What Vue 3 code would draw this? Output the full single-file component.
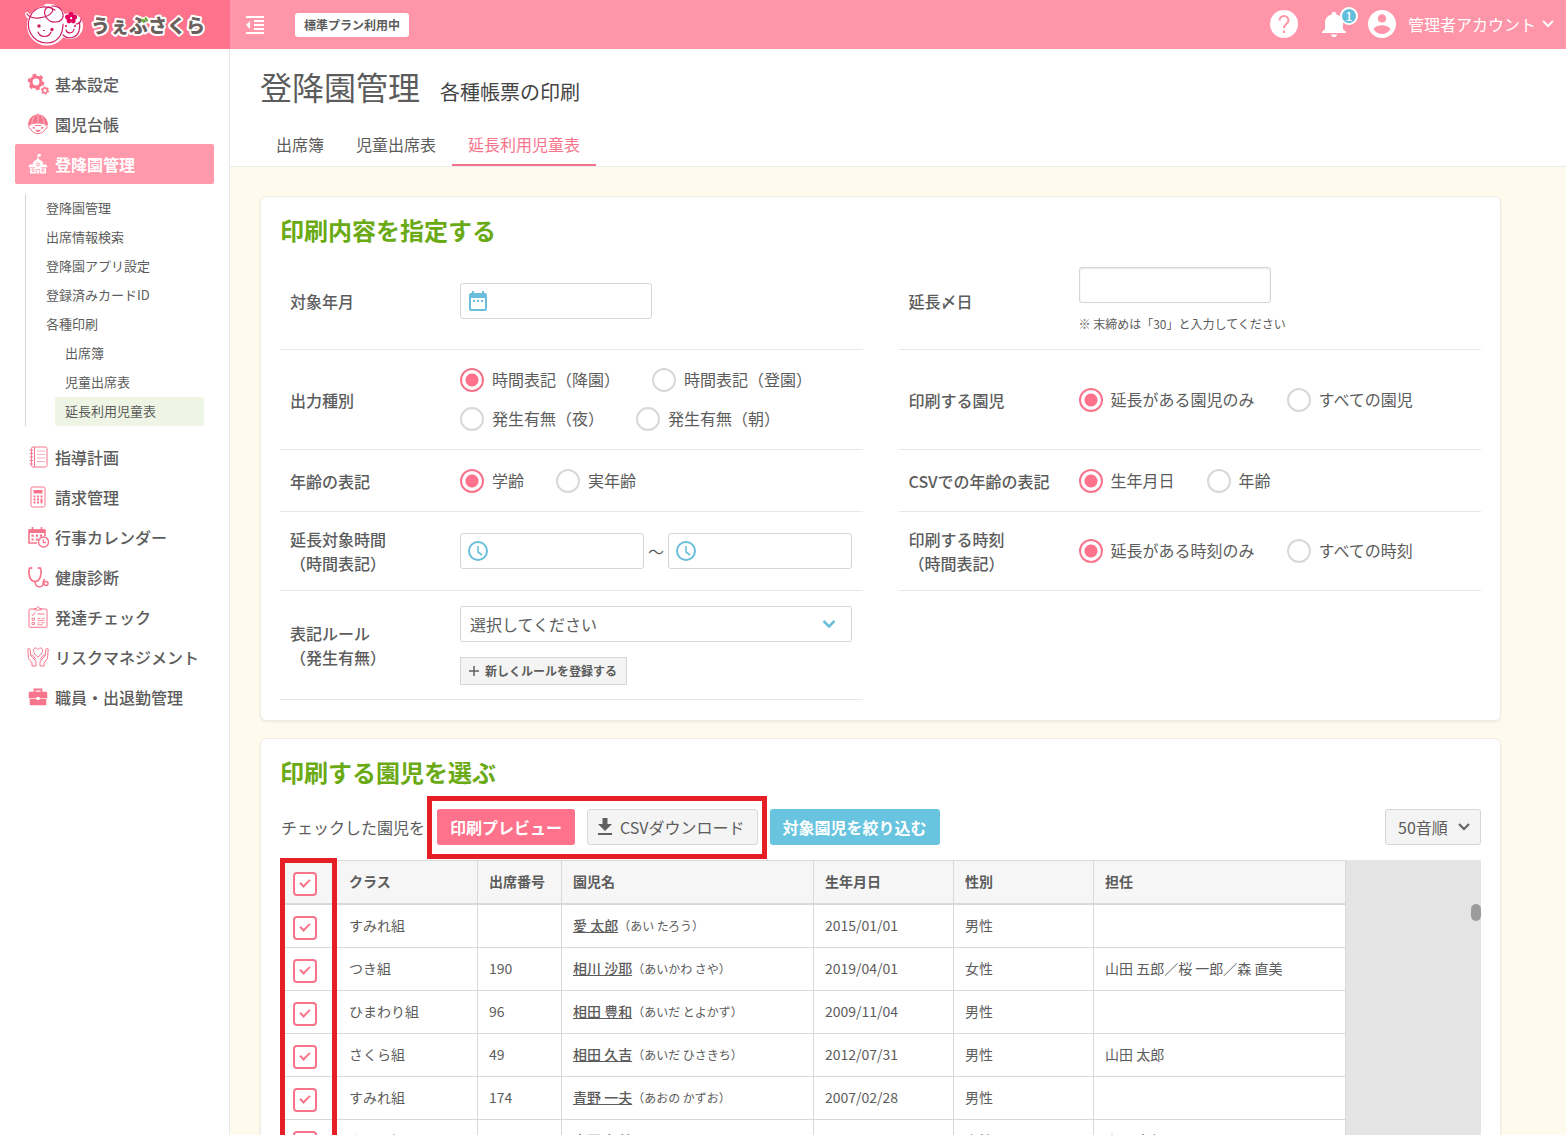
<script setup>
import { ref } from 'vue'

const menuTop = [
  { icon: 'gears', label: '基本設定' },
  { icon: 'child', label: '園児台帳' },
  { icon: 'school', label: '登降園管理', active: true },
]
const subMenu = [
  { label: '登降園管理' },
  { label: '出席情報検索' },
  { label: '登降園アプリ設定' },
  { label: '登録済みカードID' },
  { label: '各種印刷' },
  { label: '出席簿', nested: true },
  { label: '児童出席表', nested: true },
  { label: '延長利用児童表', nested: true, current: true },
]
const menuBottom = [
  { icon: 'notebook', label: '指導計画' },
  { icon: 'calculator', label: '請求管理' },
  { icon: 'calendar', label: '行事カレンダー' },
  { icon: 'stethoscope', label: '健康診断' },
  { icon: 'clipboard', label: '発達チェック' },
  { icon: 'hands', label: 'リスクマネジメント' },
  { icon: 'briefcase', label: '職員・出退勤管理' },
]

const icons = {
  gears: `<circle cx="9" cy="9" r="5" stroke-width="3.200"/><circle cx="9" cy="9" r="7.200" stroke-width="2.200" stroke-dasharray="3.700 3.840"/><circle cx="18" cy="17.500" r="2.400" stroke-width="1.500"/><circle cx="18" cy="17.500" r="3.500" stroke-width="1.200" stroke-dasharray="1.800 1.860"/>`,
  child: `<path d="M1.500 12C2 5 6 2 11 2s9 3 9.500 10c-6-2.600-13-2.600-19 0z" fill="currentColor"/><path d="M11 2v8.500M7.500 3C5.500 5.500 5 8 5 10.500M14.500 3c2 2.500 2.500 5 2.500 7.500" stroke="#fff" stroke-width=".5"/><path d="M10 1.200h2"/><path d="M3.500 12.500c-2-.6-2.700 3.300.2 3.400 1.700 6.200 12.900 6.200 14.600 0 2.900-.1 2.200-4 .2-3.400"/><path d="M8 12.500h6M8.700 17.300c1.400 1.500 3.200 1.500 4.600 0z" fill="currentColor"/><circle cx="6.800" cy="14.800" r=".7" fill="currentColor"/><circle cx="15.200" cy="14.800" r=".7" fill="currentColor"/>`,
  school: `<path d="M11 8V1.500M11 1.500h2.500v1.500H11" fill="currentColor"/><path d="M11 5.500l5 3.500v2.500h3.500l1 3h-19l1-3H6V9z" fill="currentColor" stroke="none"/><path d="M3 14v6.500h16V14z" fill="currentColor" stroke="none"/><g stroke="#ff99ab"><circle cx="11" cy="11.500" r="1.500"/><path d="M9.300 20.500v-4h3.400v4M5 16h2v2.500H5zM15 16h2v2.500h-2zM2 14.700h6M14 14.700h6" stroke-width=".8"/></g>`,
  notebook: `<rect x="4.500" y="1" width="15.500" height="20" rx="1.500"/><path d="M7.500 1v20M2.500 4h3.500M2.500 7.500h3.500M2.500 11h3.500M2.500 14.500h3.500M2.500 18h3.500" /><path d="M10 5h8M10 8.500h8M10 12h8M10 15.500h8" stroke-width=".6"/>`,
  calculator: `<rect x="4" y="1" width="14" height="20" rx="1.500"/><path d="M6.500 4h9v3.500h-9z" fill="currentColor" stroke="none"/><path d="M6.500 10.500h2M10 10.500h2M13.500 10.500h2M6.500 13.500h2M10 13.500h2M6.500 16.500h2M10 16.500h2" stroke-width="1.800"/><path d="M14.500 12.600v4.800" stroke-width="2"/>`,
  calendar: `<path d="M10 17H2V4h16v6" stroke-width="1.600"/><path d="M2 3.500h16V7H2z" fill="currentColor" stroke="none"/><path d="M5.500 1v4M14.500 1v4" stroke-width="1.700"/><path d="M4.500 9.700h2.200M8.800 9.700H11M13 9.700h2.200M4.500 13.500h2.200M8.800 13.500H11" stroke-width="2.200"/><circle cx="16.500" cy="16" r="5" fill="#fff" stroke-width="1.500"/><path d="M16.300 13.200v3.300h2.600" stroke-width="1.300"/>`,
  stethoscope: `<path d="M5 2H2.500C.8 7 2.500 15.500 8 15.500S15.200 7 13.500 2H11" stroke-width="1.700"/><path d="M8 15.500c0 7 8 6 8 2.500 0-3 .5-4.500 2-4.500" stroke-width="1.500"/><circle cx="19" cy="17.500" r="2" stroke-width="1.500"/><path d="M4.500 1.200v1.700M11.500 1.200v1.700" stroke-width="1.500"/>`,
  clipboard: `<rect x="2" y="3" width="18" height="18.300" rx="1"/><path d="M7.500 4V2.500h2c0-2 3-2 3 0h2V4z" fill="#fff"/><path d="M4.800 8.500l1.200 1 2-3M10.500 8h7"/><path d="M5 12.200h2.500v2H5zM5 16.500h2.500v2H5zM10.500 12.300h3M15 12.300h2.500M10.500 14.300h7M10.500 16.800h2M14 16.800h3.500M10.500 18.800h5" stroke-width=".9"/>`,
  hands: `<path d="M11 11C4.500 6.500 6 2 8.500 2 10 2 11 3.600 11 3.600S12 2 13.500 2C16 2 17.500 6.500 11 11z"/><path d="M5 20v-3l-3.500-4.500-.7-9.500c1-1 2.200-.6 2.300.5l.7 6 4 4.500c1.500 1.500 1.200 3 1.200 6zM3.800 9.500c1-.9 2-.4 2.500.3l2.500 3.500"/><path d="M17 20v-3l3.500-4.500.7-9.500c-1-1-2.200-.6-2.300.5l-.7 6-4 4.500c-1.500 1.500-1.200 3-1.200 6zM18.200 9.500c-1-.9-2-.4-2.500.3l-2.500 3.500"/>`,
  briefcase: `<path d="M2.500 6.500h17v5.500h-17zM3.500 13h15v5.500h-15z" fill="currentColor" stroke-linejoin="round" stroke-width="1.500"/><path d="M7.500 6V3.500h7V6" stroke-width="1.800"/><path d="M2 12.500h18" stroke="#fff" stroke-width=".7"/><path d="M9.500 11h3v3h-3z" fill="#fff" stroke="none"/>`,
}

const tabs = [
  { label: '出席簿' },
  { label: '児童出席表' },
  { label: '延長利用児童表', active: true },
]

const output = ref('降園')
const target = ref('延長')
const age = ref('学齢')
const csvAge = ref('生年月日')
const clock = ref('延長')

const columns = ['クラス', '出席番号', '園児名', '生年月日', '性別', '担任']
const children = ref([
  { group: 'すみれ組', no: '', name: '愛 太郎', kana: 'あい たろう', birth: '2015/01/01', sex: '男性', teacher: '', on: true },
  { group: 'つき組', no: '190', name: '相川 沙耶', kana: 'あいかわ さや', birth: '2019/04/01', sex: '女性', teacher: '山田 五郎／桜 一郎／森 直美', on: true },
  { group: 'ひまわり組', no: '96', name: '相田 豊和', kana: 'あいだ とよかず', birth: '2009/11/04', sex: '男性', teacher: '', on: true },
  { group: 'さくら組', no: '49', name: '相田 久吉', kana: 'あいだ ひさきち', birth: '2012/07/31', sex: '男性', teacher: '山田 太郎', on: true },
  { group: 'すみれ組', no: '174', name: '青野 一夫', kana: 'あおの かずお', birth: '2007/02/28', sex: '男性', teacher: '', on: true },
  { group: 'さくら組', no: '50', name: '青野 久美', kana: 'あおの くみ', birth: '2012/05/20', sex: '女性', teacher: '山田 太郎', on: true },
])
const all = ref(true)
function toggleAll() {
  children.value.forEach((c) => { c.on = all.value })
}
</script>

<template>
  <div class="shell">
    <header class="topbar">
      <a class="brand" href="#" aria-label="うぇぶさくら">
        <svg width="190" height="44" viewBox="22 2 190 44" fill="none" stroke-linecap="round">
          <circle cx="47" cy="24.500" r="20" fill="#fff" />
          <circle cx="70" cy="25" r="13" fill="#fff" />
          <path d="M27 13c2 5 8 5 12 2M46 5c8-1 16 4 18 12" stroke="#fff" stroke-width="4" />
          <g stroke="#cf1c63" stroke-width="1.200">
            <path d="M55 9C46 3 35 6 31 14c-7 12 1 28 16 28 10 0 16-8 16-19" />
            <path d="M27 13c5 7 21 4 25-2 3-5-5-7-7-2-2 6 4 13 11 12 5 0 8-4 7-8-1-5-5-8-11-8" />
            <path d="M63 34c5 5 14 3 16-4 1-4 1-7 0-9M81 18c0 3-2 5-5 5" />
            <path d="M38 31c2 6 11 6 13 0M66 29c1 4 7 4 8-1" />
            <path d="M43.500 29.500h1" />
          </g>
          <g fill="#cf1c63"><circle cx="39" cy="25" r="1.700" /><circle cx="52" cy="28.500" r="1.700" /><circle cx="66" cy="25" r="1.100" /><circle cx="75" cy="25" r="1.100" /></g>
          <g fill="#e4005d"><circle cx="71" cy="13.500" r="2.600" /><circle cx="67.700" cy="16" r="2.600" /><circle cx="69" cy="20" r="2.400" /><circle cx="73.300" cy="20" r="2.400" /><circle cx="74.500" cy="16" r="2.600" /></g>
          <text x="91" y="32" class="brand-name">うぇぶさくら</text>
          <path d="M142 18.500l1.500 2.500M145.500 17l1.500 2.500" stroke="#6fba2c" stroke-width="2" />
        </svg>
      </a>
      <button class="plain" type="button" aria-label="メニューを閉じる">
        <svg width="18" height="18" viewBox="3 3 18 18" fill="#fff"><path d="M11 17h10v-2H11v2zm-8-5l4 4V8l-4 4zm0 9h18v-2H3v2zM3 3v2h18V3H3zm8 6h10V7H11v2zm0 4h10v-2H11v2z" /></svg>
      </button>
      <span class="plan">標準プラン利用中</span>
      <div class="tools">
        <button class="plain" type="button" aria-label="ヘルプ">
          <svg width="28" height="28" viewBox="0 0 28 28"><circle cx="14" cy="14" r="14" fill="#fff" /><path d="M9.500 10.500a4.500 4.500 0 119 0c0 3.500-4.500 3.700-4.500 7.500" fill="none" stroke="#ff95a8" stroke-width="2" /><path d="M13 20.500h2v2.500h-2z" fill="#ff95a8" /></svg>
        </button>
        <button class="plain bell" type="button" aria-label="お知らせ">
          <svg width="24" height="26" viewBox="4 2 16 20" fill="#fff" preserveAspectRatio="none"><path d="M12 22c1.100 0 2-.9 2-2h-4c0 1.100.89 2 2 2zm6-6v-5c0-3.070-1.640-5.640-4.500-6.320V4c0-.83-.67-1.500-1.500-1.500s-1.500.67-1.500 1.500v.68C7.630 5.360 6 7.920 6 11v5l-2 2v1h16v-1l-2-2z" /></svg>
          <span class="count">1</span>
        </button>
        <button class="plain account" type="button">
          <svg width="28" height="28" viewBox="2 2 20 20" fill="#fff"><path d="M12 2C6.480 2 2 6.480 2 12s4.480 10 10 10 10-4.480 10-10S17.520 2 12 2zm0 3c1.660 0 3 1.340 3 3s-1.340 3-3 3-3-1.340-3-3 1.340-3 3-3zm0 14.200c-2.500 0-4.710-1.280-6-3.220.03-1.990 4-3.080 6-3.080 1.990 0 5.970 1.090 6 3.080-1.290 1.940-3.500 3.220-6 3.220z" /></svg>
          <span>管理者アカウント</span>
          <svg class="caret" width="12" height="8" viewBox="0 0 12 8" fill="none" stroke="#fff" stroke-width="2"><path d="M1 1l5 5 5-5" /></svg>
        </button>
      </div>
    </header>

    <div class="body">
      <nav class="sidebar">
        <a v-for="m in menuTop" :key="m.label" href="#" class="item" :class="{ active: m.active }">
          <svg class="glyph" viewBox="0 0 22 22" v-html="icons[m.icon]" />
          {{ m.label }}
        </a>
        <div class="submenu">
          <a v-for="s in subMenu" :key="s.label + s.nested" href="#" class="sub" :class="{ nested: s.nested, current: s.current }">{{ s.label }}</a>
        </div>
        <a v-for="m in menuBottom" :key="m.label" href="#" class="item">
          <svg class="glyph" viewBox="0 0 22 22" v-html="icons[m.icon]" />
          {{ m.label }}
        </a>
      </nav>

      <main class="main">
        <div class="pagehead">
          <div class="titles">
            <h1>登降園管理</h1>
            <p>各種帳票の印刷</p>
          </div>
          <div class="tabs">
            <a v-for="t in tabs" :key="t.label" href="#" :class="{ active: t.active }">{{ t.label }}</a>
          </div>
        </div>

        <div class="content">
          <section class="card">
            <h2>印刷内容を指定する</h2>
            <form class="form" @submit.prevent>
              <div class="row">
                <label class="name" for="month">対象年月</label>
                <div class="iconbox month">
                  <svg width="18" height="20" viewBox="0 0 18 20"><path d="M3 0h2v2h8V0h2v2h1a2 2 0 012 2v14a2 2 0 01-2 2H2a2 2 0 01-2-2V4a2 2 0 012-2h1zM2 7v11h14V7z" fill="#69bfdb" fill-rule="evenodd" /><path d="M4 9h2v2H4zm4 0h2v2H8zm4 0h2v2h-2z" fill="#69bfdb" /></svg>
                  <input id="month" type="text" />
                </div>
              </div>
              <div class="row">
                <label class="name" for="closing">延長〆日</label>
                <div>
                  <input id="closing" class="closing" type="text" />
                  <p class="note">※ 末締めは「30」と入力してください</p>
                </div>
              </div>

              <div class="row">
                <span class="name">出力種別</span>
                <div class="radios two">
                  <div class="line">
                    <label class="radio"><input v-model="output" type="radio" name="output" value="降園" />時間表記（降園）</label>
                    <label class="radio"><input v-model="output" type="radio" name="output" value="登園" />時間表記（登園）</label>
                  </div>
                  <div class="line">
                    <label class="radio"><input v-model="output" type="radio" name="output" value="夜" />発生有無（夜）</label>
                    <label class="radio"><input v-model="output" type="radio" name="output" value="朝" />発生有無（朝）</label>
                  </div>
                </div>
              </div>
              <div class="row">
                <span class="name">印刷する園児</span>
                <div class="line">
                  <label class="radio"><input v-model="target" type="radio" name="target" value="延長" />延長がある園児のみ</label>
                  <label class="radio"><input v-model="target" type="radio" name="target" value="全部" />すべての園児</label>
                </div>
              </div>

              <div class="row">
                <span class="name">年齢の表記</span>
                <div class="line">
                  <label class="radio"><input v-model="age" type="radio" name="age" value="学齢" />学齢</label>
                  <label class="radio"><input v-model="age" type="radio" name="age" value="実年齢" />実年齢</label>
                </div>
              </div>
              <div class="row">
                <span class="name">CSVでの年齢の表記</span>
                <div class="line">
                  <label class="radio"><input v-model="csvAge" type="radio" name="csvAge" value="生年月日" />生年月日</label>
                  <label class="radio"><input v-model="csvAge" type="radio" name="csvAge" value="年齢" />年齢</label>
                </div>
              </div>

              <div class="row">
                <label class="name" for="from">延長対象時間<br />（時間表記）</label>
                <div class="range">
                  <div class="iconbox">
                    <svg width="20" height="20" viewBox="0 0 20 20" fill="none" stroke="#69bfdb" stroke-width="2"><circle cx="10" cy="10" r="9" /><path d="M10 5v6l4 3" stroke-width="1.600" /></svg>
                    <input id="from" type="text" />
                  </div>
                  <span class="wave">～</span>
                  <div class="iconbox">
                    <svg width="20" height="20" viewBox="0 0 20 20" fill="none" stroke="#69bfdb" stroke-width="2"><circle cx="10" cy="10" r="9" /><path d="M10 5v6l4 3" stroke-width="1.600" /></svg>
                    <input type="text" aria-label="終了時刻" />
                  </div>
                </div>
              </div>
              <div class="row">
                <span class="name">印刷する時刻<br />（時間表記）</span>
                <div class="line">
                  <label class="radio"><input v-model="clock" type="radio" name="clock" value="延長" />延長がある時刻のみ</label>
                  <label class="radio"><input v-model="clock" type="radio" name="clock" value="全部" />すべての時刻</label>
                </div>
              </div>

              <div class="row">
                <label class="name" for="rule">表記ルール<br />（発生有無）</label>
                <div class="rule">
                  <div class="select">
                    <select id="rule"><option>選択してください</option></select>
                    <svg width="14" height="9" viewBox="0 0 14 9" fill="none" stroke="#69bfdb" stroke-width="2.500"><path d="M1.500 1L7 6.500 12.500 1" /></svg>
                  </div>
                  <button class="add" type="button">
                    <svg width="10" height="10" viewBox="0 0 10 10" stroke="#606060" stroke-width="1.500"><path d="M5 0v10M0 5h10" /></svg>
                    新しくルールを登録する
                  </button>
                </div>
              </div>
            </form>
          </section>

          <section class="card">
            <h2>印刷する園児を選ぶ</h2>
            <div class="toolbar">
              <span>チェックした園児を</span>
              <div class="marked">
                <button class="btn pink" type="button">印刷プレビュー</button>
                <button class="btn gray" type="button">
                  <svg width="16" height="18" viewBox="0 0 16 18" fill="#606060"><path d="M5.500 0h5v6H15l-7 7-7-7h4.500zM1 15h14v2H1z" /></svg>
                  CSVダウンロード
                </button>
              </div>
              <button class="btn blue" type="button">対象園児を絞り込む</button>
              <div class="select sort">
                <select aria-label="並び順"><option>50音順</option></select>
                <svg width="12" height="8" viewBox="0 0 12 8" fill="none" stroke="#606060" stroke-width="2"><path d="M1 1l5 5 5-5" /></svg>
              </div>
            </div>

            <div class="grid">
              <table>
                <colgroup>
                  <col class="c-check" /><col class="c-mid" /><col class="c-no" /><col class="c-wide" /><col class="c-mid" /><col class="c-mid" /><col class="c-wide" />
                </colgroup>
                <thead>
                  <tr>
                    <th><input v-model="all" type="checkbox" aria-label="すべて選択" @change="toggleAll" /></th>
                    <th v-for="c in columns" :key="c">{{ c }}</th>
                  </tr>
                </thead>
                <tbody>
                  <tr v-for="c in children" :key="c.name">
                    <td><input v-model="c.on" type="checkbox" :aria-label="c.name" /></td>
                    <td>{{ c.group }}</td>
                    <td>{{ c.no }}</td>
                    <td><a href="#">{{ c.name }}</a><small>（{{ c.kana }}）</small></td>
                    <td>{{ c.birth }}</td>
                    <td>{{ c.sex }}</td>
                    <td>{{ c.teacher }}</td>
                  </tr>
                </tbody>
              </table>
              <span class="thumb"></span>
            </div>
          </section>
        </div>
      </main>
    </div>
  </div>
</template>

<style>
body {
  margin: 0;
}
</style>

<style scoped>
.shell {
  display: flex;
  flex-direction: column;
  height: 100vh;
  overflow: hidden;
  color: #5c5c5c;
  font-family: "Noto Sans CJK JP", sans-serif;
  font-size: 16px;
  line-height: 24px;
}
.shell *,
.shell *::before,
.shell *::after {
  box-sizing: border-box;
}
a {
  color: inherit;
  text-decoration: none;
}
button,
input,
select {
  font: inherit;
  color: inherit;
}
h1,
h2,
p {
  margin: 0;
}
svg {
  display: block;
  flex: none;
}
.topbar {
  display: flex;
  align-items: center;
  flex: none;
  height: 49px;
  background: #ff95a8;
  color: #fff;
}
.brand {
  display: flex;
  align-items: center;
  width: 230px;
  height: 100%;
  padding-left: 22px;
  margin-right: 16px;
  background: #ff728b;
}
.brand-name {
  font-size: 19px;
  font-weight: 900;
  fill: #6b5f5c;
  stroke: #fff;
  stroke-width: 4px;
  stroke-linejoin: round;
  paint-order: stroke;
}
.plain {
  display: flex;
  padding: 0;
  border: 0;
  background: none;
}
.plan {
  margin-left: 31px;
  padding: 0 9px;
  border-radius: 3px;
  background: #fff;
  color: #5c5c5c;
  font-size: 12px;
  font-weight: 700;
}
.tools {
  display: flex;
  align-items: center;
  gap: 22px;
  margin-left: auto;
  padding: 0 12px 2px 0;
}
.bell {
  position: relative;
  margin-left: 2px;
}
.count {
  position: absolute;
  top: -4px;
  right: -12px;
  width: 18px;
  height: 18px;
  border: 2px solid #fff;
  border-radius: 50%;
  background: #62bfdc;
  font-size: 12px;
  font-weight: 500;
  line-height: 14px;
  text-align: center;
}
.account {
  align-items: center;
  gap: 12px;
}
.caret {
  margin-left: -6px;
}
.body {
  display: flex;
  flex: 1;
  min-height: 0;
}
.sidebar {
  flex: none;
  width: 230px;
  padding: 15px;
  border-right: 1px solid #e9e9e9;
  background: #fff;
}
.item {
  display: flex;
  align-items: center;
  gap: 6px;
  height: 40px;
  padding-left: 12px;
  border-radius: 2px;
  font-weight: 500;
}
.glyph {
  width: 22px;
  height: 22px;
  color: #f7758c;
  fill: none;
  stroke: currentColor;
}
.item.active {
  background: #ff99ab;
  color: #fff;
  font-weight: 700;
}
.item.active .glyph {
  color: #fff;
}
.submenu {
  margin: 10px 10px 11px;
  border-left: 1px solid #d5d5d5;
}
.sub {
  display: block;
  padding: 0 0 2px 20px;
  font-size: 13px;
  line-height: 27px;
}
.sub.nested {
  margin-left: 29px;
  padding-left: 10px;
}
.sub.current {
  border-radius: 2px;
  background: #eff5e4;
}
.main {
  flex: 1;
  min-width: 0;
  overflow-y: auto;
  scrollbar-width: none;
  background: #fffaee;
}
.pagehead {
  padding: 13px 30px 0;
  border-bottom: 1px solid #ebebeb;
  background: #fff;
}
.titles {
  display: flex;
  align-items: baseline;
  gap: 20px;
}
h1 {
  font-size: 32px;
  font-weight: 400;
  line-height: 48px;
}
.titles p {
  color: #444;
  font-size: 20px;
}
.tabs {
  display: flex;
  margin-top: 15px;
}
.tabs a {
  height: 41px;
  padding: 0 16px;
  line-height: 39px;
}
.tabs .active {
  border-bottom: 2px solid #f7758c;
  color: #f7758c;
}
.content {
  display: flex;
  flex-direction: column;
  gap: 17px;
  padding: 29px 65px 30px 30px;
}
.card {
  padding: 15px 19px 20px;
  border: 1px solid #efece4;
  border-radius: 6px;
  background: #fff;
  box-shadow: 0 1px 2px rgba(0, 0, 0, 0.08);
}
h2 {
  color: #6aaa14;
  font-size: 24px;
  font-weight: 700;
  line-height: 36px;
}
.form {
  display: grid;
  grid-template-columns: 1fr 1fr;
  grid-template-rows: 98px 100px 62px 79px 109px;
  column-gap: 36px;
  margin-top: 4px;
}
.row {
  display: flex;
  align-items: center;
  border-bottom: 1px solid #e8e8e8;
}
.name {
  flex: none;
  width: 180px;
  padding-left: 10px;
  font-weight: 500;
}
.iconbox {
  display: flex;
  align-items: center;
  width: 184px;
  height: 36px;
  padding-left: 7px;
  border: 1px solid #d5d5d5;
  border-radius: 3px;
  background: #fff;
}
.iconbox.month {
  width: 192px;
  padding-left: 8px;
}
.iconbox input {
  flex: 1;
  min-width: 0;
  border: 0;
  outline: 0;
  background: none;
}
.closing {
  display: block;
  width: 192px;
  height: 36px;
  border: 1px solid #d5d5d5;
  border-radius: 3px;
  box-shadow: inset 0 1px 2px rgba(0, 0, 0, 0.1);
}
.note {
  margin-top: 11px;
  font-size: 12px;
  line-height: 20px;
}
.radios {
  display: flex;
  flex-direction: column;
  gap: 15px;
}
.line {
  display: flex;
  gap: 32px;
}
.radio {
  display: flex;
  align-items: flex-start;
  gap: 8px;
  line-height: 22px;
}
.radio input {
  appearance: none;
  width: 24px;
  height: 24px;
  margin: 0;
  border: 2px solid #d8d8d8;
  border-radius: 50%;
  background: #fff;
}
.radio input:checked {
  border-color: #f7758c;
  background: radial-gradient(circle, #ff728b 6px, #fff 7px);
}
.range {
  display: flex;
  align-items: center;
}
.wave {
  width: 24px;
  text-align: center;
}
.rule {
  width: 392px;
}
.select {
  position: relative;
}
.select select {
  display: block;
  appearance: none;
  width: 100%;
  height: 36px;
  padding: 0 9px;
  border: 1px solid #d5d5d5;
  border-radius: 3px;
  background: #fff;
}
.select svg {
  position: absolute;
  top: 14px;
  right: 16px;
  pointer-events: none;
}
.add {
  display: flex;
  align-items: center;
  gap: 6px;
  height: 28px;
  margin-top: 15px;
  padding: 0 9px 0 8px;
  border: 1px solid #d5d5d5;
  background: #f4f4f4;
  font-size: 12px;
  font-weight: 700;
}
.toolbar {
  display: flex;
  align-items: center;
  gap: 12px;
  margin: 19px 0 15px;
  padding-left: 1px;
}
.marked {
  position: relative;
  display: flex;
  gap: 12px;
}
.marked::after {
  content: "";
  position: absolute;
  inset: -13px -9px -14px -10px;
  border: 5px solid #e61f27;
  pointer-events: none;
}
.btn {
  display: flex;
  align-items: center;
  gap: 7px;
  height: 36px;
  padding: 0 13px;
  border: 0;
  border-radius: 3px;
  color: #fff;
  font-weight: 700;
  white-space: nowrap;
}
.pink {
  background: #ff728b;
}
.blue {
  background: #69c4df;
}
.gray {
  padding: 0 12px 0 9px;
  border: 1px solid #d8d8d8;
  background: #f4f4f4;
  color: #5c5c5c;
  font-weight: 400;
}
.sort {
  width: 96px;
  margin-left: auto;
}
.sort select {
  padding: 0 12px;
  background: #f4f4f4;
}
.sort svg {
  right: 11px;
}
.grid {
  position: relative;
  background: #e4e4e4;
}
.grid::before {
  content: "";
  position: absolute;
  top: -2px;
  bottom: 0;
  left: 0;
  width: 57px;
  border: 5px solid #e61f27;
  pointer-events: none;
}
.thumb {
  position: absolute;
  top: 44px;
  right: 0;
  width: 10px;
  height: 17px;
  border-radius: 5px;
  background: #9b9b9b;
}
table {
  table-layout: fixed;
  width: 1066px;
  border-spacing: 0;
  background: #fff;
  font-size: 14px;
}
.c-check {
  width: 58px;
}
.c-mid {
  width: 140px;
}
.c-no {
  width: 84px;
}
.c-wide {
  width: 252px;
}
th,
td {
  height: 43px;
  padding: 0 11px 2px;
  border-right: 1px solid #d9d9d9;
  border-bottom: 1px solid #d9d9d9;
  text-align: left;
  white-space: nowrap;
}
th {
  height: 45px;
  border-top: 1px solid #d9d9d9;
  border-bottom-width: 2px;
  background: #f6f6f6;
}
th:first-child,
td:first-child {
  padding: 3px 0 0 13px;
  border-right: 0;
}
td a {
  font-weight: 500;
  text-decoration: underline;
}
td small {
  font-size: 12px;
}
td input,
th input {
  display: block;
  appearance: none;
  width: 24px;
  height: 24px;
  margin: 0;
  border: 2px solid #f7758c;
  border-radius: 4px;
  background: #fff;
}
td input:checked::before,
th input:checked::before {
  content: "";
  display: block;
  width: 6px;
  height: 10px;
  margin: 3px auto 0;
  border: solid #f7758c;
  border-width: 0 2px 2px 0;
  rotate: 45deg;
}
</style>
